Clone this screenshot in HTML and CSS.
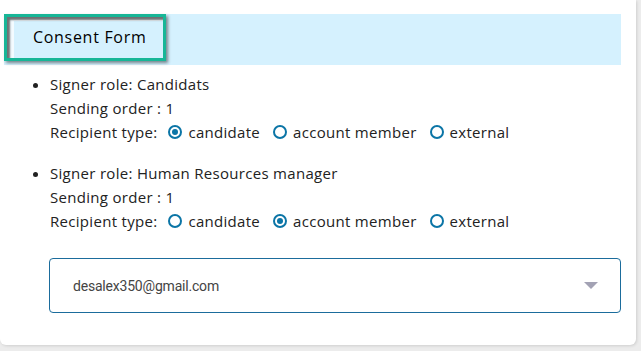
FILE: index.html
```html
<!DOCTYPE html>
<html>
<head>
<meta charset="utf-8">
<link rel="stylesheet" href="styles.css">
</head>
<body>
<div class="card">
  <div class="header">
    <div class="tab"><span class="tab-title">Consent Form</span></div>
  </div>
  <ul class="signers">
    <li class="signer">
      <div class="line">Signer role: Candidats</div>
      <div class="line">Sending order : 1</div>
      <div class="line radios">
        <span class="label">Recipient type:</span>
        <label class="radio"><span class="dot checked"></span>candidate</label>
        <label class="radio"><span class="dot"></span>account member</label>
        <label class="radio"><span class="dot"></span>external</label>
      </div>
    </li>
    <li class="signer">
      <div class="line">Signer role: Human Resources manager</div>
      <div class="line">Sending order : 1</div>
      <div class="line radios">
        <span class="label">Recipient type:</span>
        <label class="radio"><span class="dot"></span>candidate</label>
        <label class="radio"><span class="dot checked"></span>account member</label>
        <label class="radio"><span class="dot"></span>external</label>
      </div>
    </li>
  </ul>
  <div class="select">
    <span class="select-value">desalex350@gmail.com</span>
    <span class="caret"></span>
  </div>
</div>
</body>
</html>
```
FILE: styles.css
```css
html, body {
  margin: 0;
  padding: 0;
}
body {
  background: #ececec;
  width: 641px;
  height: 351px;
  overflow: hidden;
}
.card {
  width: 636px;
  height: 345px;
  background: #fff;
  border-radius: 0 0 6px 6px;
  box-shadow: 1px 1px 3px rgba(0,0,0,0.12);
  padding-top: 14px;
  box-sizing: border-box;
  display: flex;
  flex-direction: column;
}
.header {
  margin-left: 4px;
  width: 617px;
  height: 51px;
  background: #d5f1fe;
}
.tab {
  width: 162px;
  height: 47px;
  box-sizing: border-box;
  border: 3px solid #17b697;
  box-shadow: 2px 2px 3px rgba(0,0,0,0.45), inset 3px 3px 2px rgba(0,0,0,0.55), inset 7px 4px 0 rgba(255,255,255,0.7);
  display: flex;
  align-items: center;
  padding-left: 26px;
  padding-bottom: 1px;
}
.tab-title {
  font-family: "Open Sans", sans-serif;
  font-weight: 500;
  font-size: 16px;
  letter-spacing: 0.7px;
  color: #000;
}
.signers {
  margin: 7px 0 0 0;
  padding: 0 0 0 50px;
  font-family: "Open Sans", sans-serif;
  font-size: 15px;
  letter-spacing: 0.3px;
  color: #222;
}
.signer {
  margin-bottom: 17px;
}
.line {
  height: 24px;
  line-height: 24px;
}
.radios {
  display: flex;
  align-items: center;
}
.label {
  margin-right: 11px;
}
.radio {
  display: flex;
  align-items: center;
  margin-right: 13px;
}
.dot {
  width: 14px;
  height: 14px;
  box-sizing: border-box;
  border: 2px solid #0b75a6;
  border-radius: 50%;
  margin-right: 6px;
  position: relative;
}
.dot.checked::after {
  content: "";
  position: absolute;
  left: 2px;
  top: 2px;
  width: 6px;
  height: 6px;
  border-radius: 50%;
  background: #0b75a6;
}
.select {
  margin: 8px 0 0 49px;
  width: 572px;
  height: 55px;
  box-sizing: border-box;
  border: 1px solid #1b6c9c;
  border-radius: 4px;
  display: flex;
  align-items: center;
  justify-content: space-between;
  padding: 0 22px 0 23px;
}
.select-value {
  font-family: Roboto, sans-serif;
  font-size: 14px;
  letter-spacing: -0.2px;
  color: #444;
}
.caret {
  width: 0;
  height: 0;
  border-left: 7px solid transparent;
  border-right: 7px solid transparent;
  border-top: 7px solid #a3a2b4;
}
```
